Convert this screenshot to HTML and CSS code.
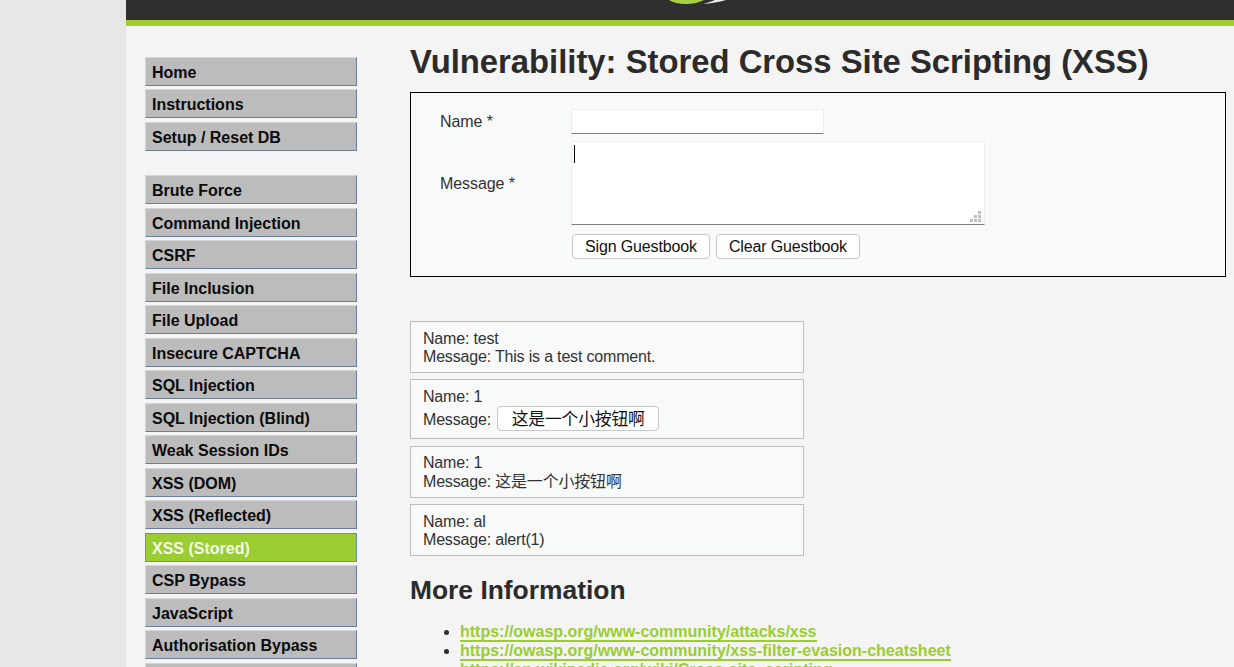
FILE: index.html
```html
<!DOCTYPE html>
<html lang="en">
<head>
<meta charset="utf-8">
<title>Vulnerability: Stored Cross Site Scripting (XSS)</title>
<link rel="stylesheet" href="styles.css">
</head>
<body>
<div class="container">
  <header class="header">
    <svg class="logo" width="70" height="6" viewBox="0 0 70 6" aria-hidden="true">
      <path d="M1 0 H36 C31 2.5 25 4 18 4 C11 4 5 2.5 1 0 Z" fill="#a8cf45"/>
      <path d="M35 4 C43 3.5 51 2 58 0 H47 C43 1.8 39 3 35 4 Z" fill="#ececec"/>
    </svg>
  </header>
  <div class="green-bar"></div>
  <div class="columns">
    <nav class="sidebar">
      <ul class="menu">
        <li class="item">Home</li>
        <li class="item">Instructions</li>
        <li class="item">Setup / Reset DB</li>
      </ul>
      <ul class="menu">
        <li class="item">Brute Force</li>
        <li class="item">Command Injection</li>
        <li class="item">CSRF</li>
        <li class="item">File Inclusion</li>
        <li class="item">File Upload</li>
        <li class="item">Insecure CAPTCHA</li>
        <li class="item">SQL Injection</li>
        <li class="item">SQL Injection (Blind)</li>
        <li class="item">Weak Session IDs</li>
        <li class="item">XSS (DOM)</li>
        <li class="item">XSS (Reflected)</li>
        <li class="item selected">XSS (Stored)</li>
        <li class="item">CSP Bypass</li>
        <li class="item">JavaScript</li>
        <li class="item">Authorisation Bypass</li>
        <li class="item">Open HTTP Redirect</li>
      </ul>
    </nav>
    <main class="main">
      <h1 class="title">Vulnerability: Stored Cross Site Scripting (XSS)</h1>
      <form class="form-box">
        <label class="label name-label" for="n">Name *</label>
        <input class="field name-field" id="n" type="text">
        <label class="label msg-label" for="m">Message *</label>
        <div class="area-wrap">
          <textarea class="field area" id="m"></textarea>
          <span class="caret"></span>
          <svg class="grip" width="11" height="11" viewBox="0 0 11 11" aria-hidden="true">
            <path d="M8 0h3v3H8zM4 4h3v3H4zM8 4h3v3H8zM0 8h3v3H0zM4 8h3v3H4zM8 8h3v3H8z" fill="#c0c0c0"/>
          </svg>
        </div>
        <div class="actions">
          <button class="btn" type="button">Sign Guestbook</button>
          <button class="btn" type="button">Clear Guestbook</button>
        </div>
      </form>
      <div class="comments">
        <div class="comment c1">Name: test<br>Message: This is a test comment.</div>
        <div class="comment c2">Name: 1<br><span class="msg-line">Message: <button class="btn small" type="button">这是一个小按钮啊</button></span></div>
        <div class="comment c3">Name: 1<br>Message: 这是一个小按钮啊</div>
        <div class="comment c4">Name: al<br>Message: alert(1)</div>
      </div>
      <h2 class="more">More Information</h2>
      <ul class="links">
        <li><a href="#">https://owasp.org/www-community/attacks/xss</a></li>
        <li><a href="#">https://owasp.org/www-community/xss-filter-evasion-cheatsheet</a></li>
        <li><a href="#">https://en.wikipedia.org/wiki/Cross-site_scripting</a></li>
      </ul>
    </main>
  </div>
</div>
</body>
</html>
```
FILE: styles.css
```css
html, body {
  margin: 0;
  padding: 0;
  height: 667px;
  overflow: hidden;
  background: #e7e7e7;
  font-family: "Liberation Sans", Arial, "Noto Sans CJK SC", sans-serif;
  font-size: 16px;
  color: #2e2e2e;
}
.container {
  margin-left: 126px;
  background: #f4f4f4;
  height: 667px;
  overflow: hidden;
}
.header {
  height: 20px;
  background: #2f2f2f;
  display: flex;
  overflow: hidden;
}
.logo { margin-left: 542px; display: block; }
.green-bar { height: 6px; background: #a1cd30; }
.columns { display: flex; }
.sidebar {
  width: 212px;
  margin-left: 19px;
  padding-top: 30.75px;
  flex: none;
}
.menu {
  list-style: none;
  margin: 0 0 24.25px;
  padding: 0;
  display: flex;
  flex-direction: column;
  gap: 3.5px;
}
.item {
  box-sizing: border-box;
  height: 29px;
  padding: 5px 0 0 6px;
  background: #bcbcbc;
  border-top: 1px solid #d4d4d4;
  border-left: 1px solid #d0d0d0;
  border-right: 1px solid #6b7d9c;
  border-bottom: 1px solid #6b7d9c;
  font-weight: 700;
  line-height: 20px;
  color: #0b0b0b;
}
.selected {
  background: #9acd32;
  color: #f4f8e8;
  border: 1px solid #6b8fa8;
}
.main {
  margin-left: 53px;
  flex: 1;
  min-width: 0;
  padding-right: 8px;
}
.title {
  margin: 17px 0 12px;
  font-size: 32.8px;
  line-height: 37px;
  font-weight: 700;
  color: #2b2b2b;
}
.form-box {
  box-sizing: border-box;
  height: 185px;
  border: 1px solid #000;
  background: #f8f9f9;
  display: grid;
  grid-template-columns: 160px 1fr;
  grid-template-rows: 25px 84px 25px;
  row-gap: 7px;
  align-content: start;
  padding: 16px 0 0 0;
}
.label {
  padding-left: 29px;
  color: #333;
  letter-spacing: -0.08px;
}
.name-label { padding-top: 4px; }
.msg-label { padding-top: 34px; }
.field {
  box-sizing: border-box;
  background: #fff;
  border: 1px solid #ececec;
  border-bottom: 1px solid #808080;
  border-radius: 1px;
  padding: 0;
  margin: 0;
  outline: none;
  display: block;
  font: inherit;
}
.name-field { width: 253px; height: 25px; }
.area-wrap { position: relative; width: 414px; height: 84px; }
.area { width: 414px; height: 84px; resize: none; }
.caret {
  position: absolute;
  left: 3px;
  top: 4px;
  width: 1px;
  height: 18px;
  background: #000;
}
.grip { position: absolute; right: 4px; bottom: 3px; }
.actions {
  grid-column: 2;
  display: flex;
  gap: 6px;
  margin-top: 2px;
  padding-left: 1px;
}
.btn {
  box-sizing: border-box;
  height: 25px;
  padding: 0 12px;
  background: #fff;
  border: 1px solid #c8c8c8;
  border-radius: 4px;
  font: inherit;
  letter-spacing: -0.14px;
  color: #111;
}
.comments {
  margin-top: 44px;
  width: 394px;
  display: flex;
  flex-direction: column;
  gap: 6px;
}
.comment {
  box-sizing: border-box;
  border: 1px solid #bdbdbd;
  background: #f8f9f9;
  padding: 8px 0 0 12px;
  line-height: 18px;
  letter-spacing: -0.18px;
  color: #333;
  height: 52px;
}
.c2 { height: 60px; }
.c3 { margin-top: 1px; padding-top: 6px; line-height: 19px; }
.c4 { padding-top: 8px; }
.msg-line { display: block; line-height: 25px; margin-top: 1px; }
.small {
  width: 162px;
  padding: 0;
  margin-left: 2px;
  font-size: 16.8px;
  vertical-align: top;
  position: relative;
  top: -1px;
}
.more {
  margin: 19px 0 0;
  font-size: 26.4px;
  line-height: 31px;
  font-weight: 700;
  color: #2b2b2b;
}
.links {
  margin: 16px 0 0;
  padding-left: 50px;
  line-height: 19px;
  font-weight: 700;
}
.links a {
  color: #9acd32;
  text-decoration: none;
  border-bottom: 2px solid #9acd32;
}
```
